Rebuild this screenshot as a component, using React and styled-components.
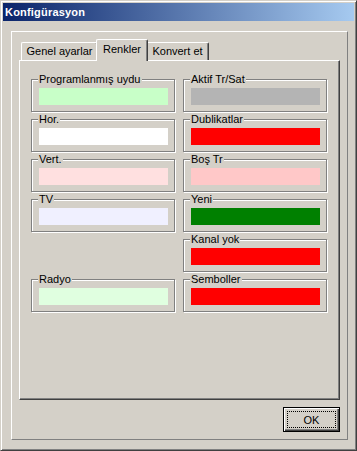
import React from "react";
import styled, { createGlobalStyle } from "styled-components";

const Global = createGlobalStyle`
  html, body {
    margin: 0;
    padding: 0;
    background: #d4d0c8;
  }
  * {
    box-sizing: border-box;
  }
`;

const colors = [
  { label: "Programlanmış uydu", color: "#c8ffc8" },
  { label: "Aktif Tr/Sat", color: "#b4b4b4" },
  { label: "Hor.", color: "#ffffff" },
  { label: "Dublikatlar", color: "#ff0000" },
  { label: "Vert.", color: "#ffe0e0" },
  { label: "Boş Tr", color: "#ffc8c8" },
  { label: "TV", color: "#f0f0ff" },
  { label: "Yeni", color: "#008000" },
  null,
  { label: "Kanal yok", color: "#ff0000" },
  { label: "Radyo", color: "#e0ffe0" },
  { label: "Semboller", color: "#ff0000" },
];

const tabs = [
  { label: "Genel ayarlar", width: 77 },
  { label: "Renkler", width: 52, active: true },
  { label: "Konvert et", width: 63 },
];

const App = () => {
  return (
    <>
      <Global />
      <Window>
        <TitleBar>Konfigürasyon</TitleBar>
        <Frame>
          <TabRow>
            {tabs.map((t) => (
              <Tab key={t.label} $active={t.active} $width={t.width}>
                {t.label}
              </Tab>
            ))}
          </TabRow>
          <Panel>
            <Grid>
              {colors.map((c, i) =>
                c ? (
                  <Group key={c.label}>
                    <Legend>{c.label}</Legend>
                    <Swatch $color={c.color} />
                  </Group>
                ) : (
                  <Empty key={"empty" + i} />
                )
              )}
            </Grid>
          </Panel>
          <OkButton>
            <Focus>OK</Focus>
          </OkButton>
        </Frame>
      </Window>
    </>
  );
};

export default App;

const Window = styled.div`
  width: 357px;
  height: 451px;
  display: flex;
  flex-direction: column;
  padding: 2px;
  background: #d4d0c8;
  border: 1px solid;
  border-color: #d4d0c8 #404040 #404040 #d4d0c8;
  box-shadow: inset 1px 1px 0 #ffffff, inset -1px -1px 0 #808080;
  font-family: "Liberation Sans", Arial, sans-serif;
  font-size: 11px;
  color: #000;
`;

const TitleBar = styled.div`
  height: 18px;
  flex: none;
  display: flex;
  align-items: center;
  padding-left: 2px;
  background: linear-gradient(to right, #0a246a, #a6caf0);
  color: #ffffff;
  font-weight: bold;
  font-size: 11px;
  letter-spacing: 0.2px;
`;

const Frame = styled.div`
  flex: 1;
  display: flex;
  flex-direction: column;
  margin: 10px 6px 8px 8px;
  padding: 7px;
  border: 1px solid;
  border-color: #ffffff #808080 #808080 #ffffff;
`;

const TabRow = styled.div`
  height: 21px;
  flex: none;
  display: flex;
  align-items: flex-end;
  padding-left: 2px;
`;

const Tab = styled.div`
  position: relative;
  width: ${(p) => p.$width}px;
  height: ${(p) => (p.$active ? 22 : 18)}px;
  margin: ${(p) => (p.$active ? "0 -2px -1px -2px" : "0")};
  z-index: ${(p) => (p.$active ? 2 : 1)};
  display: flex;
  justify-content: center;
  padding-top: ${(p) => (p.$active ? 3 : 2)}px;
  line-height: 13px;
  background: #d4d0c8;
  border-top: 1px solid #ffffff;
  border-left: 1px solid #ffffff;
  border-right: 1px solid #404040;
  border-radius: 2px 2px 0 0;
  box-shadow: inset -1px 0 0 #808080;
  white-space: nowrap;
`;

const Panel = styled.div`
  flex: 1;
  position: relative;
  z-index: 1;
  padding: 12px 0 0 11px;
  border: 1px solid;
  border-color: #ffffff #404040 #404040 #ffffff;
  box-shadow: inset -1px -1px 0 #808080;
`;

const Grid = styled.div`
  display: grid;
  grid-template-columns: 144px 144px;
  column-gap: 8px;
  row-gap: 1px;
`;

const Group = styled.fieldset`
  margin: 0;
  padding: 0;
  min-width: 0;
  border: 1px solid #808080;
  box-shadow: inset 1px 1px 0 #ffffff, 1px 1px 0 #ffffff;
`;

const Empty = styled.div`
  height: 39px;
`;

const Legend = styled.legend`
  margin-left: 6px;
  padding: 0 1px;
  font-size: 11px;
  line-height: 13px;
  background: #d4d0c8;
`;

const Swatch = styled.div`
  width: 129px;
  height: 17px;
  margin: 2px 6px 6px 7px;
  background: ${(p) => p.$color};
`;

const OkButton = styled.button`
  align-self: flex-end;
  flex: none;
  width: 57px;
  height: 25px;
  margin-top: 7px;
  padding: 3px;
  background: #d4d0c8;
  border: 1px solid #000000;
  box-shadow: inset 1px 1px 0 #ffffff, inset -1px -1px 0 #404040,
    inset -2px -2px 0 #808080;
  font-family: "Liberation Sans", Arial, sans-serif;
  font-size: 11px;
  color: #000;
`;

const Focus = styled.span`
  display: flex;
  align-items: center;
  justify-content: center;
  height: 100%;
  border: 1px dotted #000000;
`;
